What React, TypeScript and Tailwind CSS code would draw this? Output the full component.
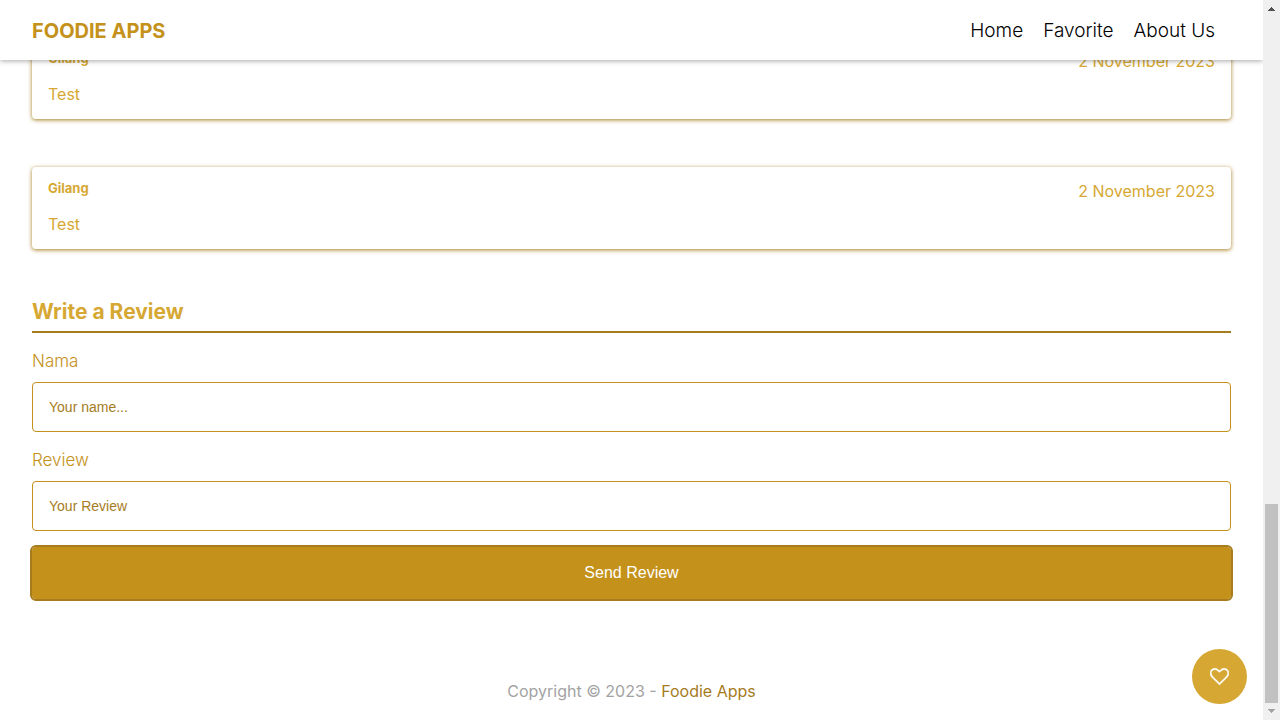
const reviews = [
  { id: 1, name: 'Gilang', date: '2 November 2023', text: 'Test' },
  { id: 2, name: 'Gilang', date: '2 November 2023', text: 'Test' },
];

const links = ['Home', 'Favorite', 'About Us'];

function Header() {
  return (
    <header className="sticky top-0 z-10 flex h-[60px] items-center justify-between bg-white pt-0.5 pr-12 pl-8 shadow-[0_1px_5px_rgba(0,0,0,0.35)]">
      <a href="#home" className="text-xl font-bold text-[#c4911b]">
        FOODIE APPS
      </a>
      <nav className="flex gap-5 text-[19px] text-black">
        {links.map((label) => (
          <a key={label} href="#" className="font-light">
            {label}
          </a>
        ))}
      </nav>
    </header>
  );
}

function ReviewCard({ name, date, text }: { name: string; date: string; text: string }) {
  return (
    <article className="rounded bg-white px-4 py-3 text-[#d6a833] shadow-[0_1px_4px_#a67c1e]">
      <div className="flex h-6 items-start justify-between">
        <h3 className="text-[13px] leading-[18px] font-bold">{name}</h3>
        <p className="text-base leading-6">{date}</p>
      </div>
      <p className="mt-2 text-base leading-[26px]">{text}</p>
    </article>
  );
}

function Field({ id, label, placeholder }: { id: string; label: string; placeholder: string }) {
  return (
    <div className="flex flex-col">
      <label htmlFor={id} className="text-[17px] leading-[25px] font-light text-[#c4911b]">
        {label}
      </label>
      <input
        id={id}
        type="text"
        placeholder={placeholder}
        className="mt-2 h-[50px] w-full rounded border border-[#c4911b] px-4 font-['Liberation_Sans',Arial,sans-serif] text-sm text-[#a67c1e] placeholder:text-[#a67c1e]"
      />
    </div>
  );
}

function ScrollTrack() {
  return (
    <div aria-hidden="true" className="sticky top-0 z-20 flex h-screen w-[17px] shrink-0 flex-col items-center bg-[#f0f0f0]">
      <svg className="h-[17px] w-[17px]" viewBox="0 0 17 17" fill="#505050" shapeRendering="crispEdges">
        <path d="M8 7h1v1h1v1h1v1h1v1H5v-1h1V9h1V8h1z" />
      </svg>
      <div className="flex-1" />
      <div className="h-[199px] w-[13px] bg-[#c1c1c1]" />
      <svg className="h-[17px] w-[17px]" viewBox="0 0 17 17" fill="#a3a3a3" shapeRendering="crispEdges">
        <path d="M5 6h7v1h-1v1h-1v1H9v1H8V9H7V8H6V7H5z" />
      </svg>
    </div>
  );
}

export default function App() {
  return (
    <div className="flex min-h-screen bg-white font-[Inter,sans-serif]">
      <div className="min-w-0 flex-1">
        <Header />
        <main className="-mt-[23px] px-8">
          <section className="flex flex-col gap-12">
            {reviews.map((r) => (
              <ReviewCard key={r.id} name={r.name} date={r.date} text={r.text} />
            ))}
          </section>
          <section className="mt-12">
            <h2 className="border-b-2 border-[#a67c1e] pb-1 text-[21px] leading-[30px] font-bold text-[#d6a833]">
              Write a Review
            </h2>
            <form className="mt-4 flex flex-col gap-4" onSubmit={(e) => e.preventDefault()}>
              <Field id="name" label="Nama" placeholder="Your name..." />
              <Field id="review" label="Review" placeholder="Your Review" />
              <button
                type="submit"
                className="h-[52px] w-full rounded bg-[#c4911b] font-['Liberation_Sans',Arial,sans-serif] text-base text-white outline-2 outline-[#a67c1e]"
              >
                Send Review
              </button>
            </form>
          </section>
        </main>
        <footer className="pt-20 pb-4 text-center text-base leading-6 text-[#a3a3a3]">
          Copyright © 2023 -{' '}
          <a href="#home" className="text-[#a67c1e]">
            Foodie Apps
          </a>
        </footer>
      </div>
      <ScrollTrack />
      <button
        type="button"
        aria-label="Like this restaurant"
        className="fixed right-[33px] bottom-4 flex size-[55px] items-center justify-center rounded-full bg-[#d6a833] text-white"
      >
        <svg className="size-[19px]" viewBox="0 0 1792 1792" fill="currentColor" stroke="currentColor" strokeWidth="40">
          <path d="M1664 596q0-81-21.5-143t-55-98.5-81.5-59.5-94-31-98-8-112 25.5-110.5 64-86.5 72-60 61.5q-18 22-49 22t-49-22q-24-28-60-61.5t-86.5-72-110.5-64-112-25.5-98 8-94 31-81.5 59.5-55 98.5-21.5 143q0 168 187 355l581 560 580-559q188-188 188-356zm128 0q0 221-229 450l-623 600q-18 18-44 18t-44-18l-624-602q-10-8-27.5-26t-55.5-65.5-68-97.5-53.5-121-23.5-138q0-220 127-344t351-124q62 0 126.5 21.5t120 58 95.5 68.5 76 68q36-36 76-68t95.5-68.5 120-58 126.5-21.5q224 0 351 124t127 344z" />
        </svg>
      </button>
    </div>
  );
}
